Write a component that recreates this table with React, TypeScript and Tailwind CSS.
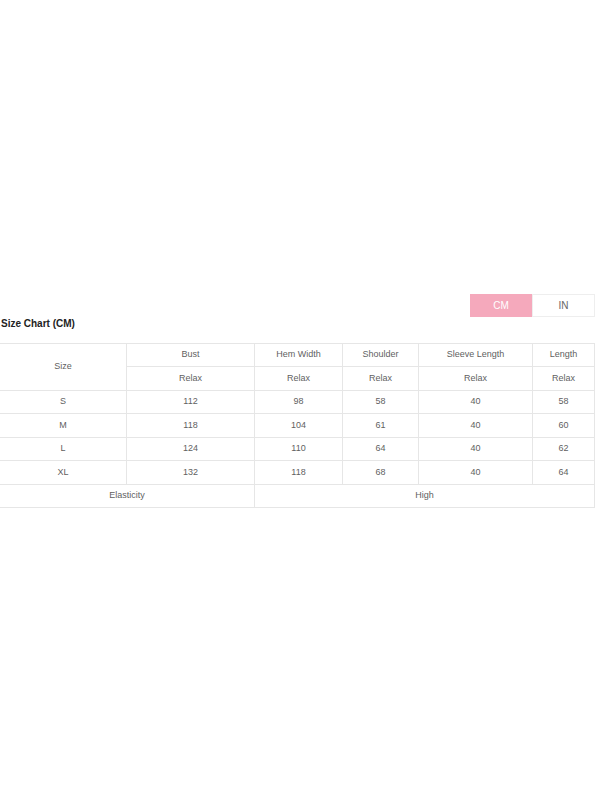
import React, { useState } from 'react';

const rows = [
  ['S', '112', '98', '58', '40', '58'],
  ['M', '118', '104', '61', '40', '60'],
  ['L', '124', '110', '64', '40', '62'],
  ['XL', '132', '118', '68', '40', '64'],
];

const cell = 'border border-[#e6e6e6] text-center font-normal p-0';

export default function App() {
  const [unit, setUnit] = useState<'CM' | 'IN'>('CM');

  return (
    <div className="min-h-[800px] bg-white pt-[294px] font-['Liberation_Sans',Arial,sans-serif] text-[#5f5f5f]">
      {/* Unit toggle */}
      <div className="flex justify-end pr-[5px]">
        <div className="flex h-[23px] text-[10px]">
          <button
            onClick={() => setUnit('CM')}
            className={`w-[62px] ${unit === 'CM' ? 'bg-[#f5a9bc] text-white' : 'border border-[#eeeeee] text-[#666]'}`}
          >
            CM
          </button>
          <button
            onClick={() => setUnit('IN')}
            className={`w-[63px] ${unit === 'IN' ? 'bg-[#f5a9bc] text-white' : 'border border-[#eeeeee] text-[#666]'}`}
          >
            IN
          </button>
        </div>
      </div>

      {/* Title */}
      <h2 className="pl-px text-[10px] font-bold leading-[14px] text-[#222]">Size Chart ({unit})</h2>

      {/* Table */}
      <table className="-ml-px mt-[12px] w-[595px] table-fixed border-collapse text-[9px]">
        <colgroup>
          <col className="w-[127px]" />
          <col className="w-[128px]" />
          <col className="w-[88px]" />
          <col className="w-[76px]" />
          <col className="w-[114px]" />
          <col className="w-[62px]" />
        </colgroup>
        <thead>
          <tr className="h-[23px]">
            <th rowSpan={2} className={cell}>Size</th>
            <th className={cell}>Bust</th>
            <th className={cell}>Hem Width</th>
            <th className={cell}>Shoulder</th>
            <th className={cell}>Sleeve Length</th>
            <th className={cell}>Length</th>
          </tr>
          <tr className="h-[24px]">
            <th className={cell}>Relax</th>
            <th className={cell}>Relax</th>
            <th className={cell}>Relax</th>
            <th className={cell}>Relax</th>
            <th className={cell}>Relax</th>
          </tr>
        </thead>
        <tbody>
          {rows.map((r, i) => (
            <tr key={r[0]} className={i % 2 === 0 ? 'h-[23px]' : 'h-[24px]'}>
              {r.map((v, j) => (
                <td key={j} className={cell}>{v}</td>
              ))}
            </tr>
          ))}
          <tr className="h-[23px]">
            <td colSpan={2} className={cell}>Elasticity</td>
            <td colSpan={4} className={cell}>High</td>
          </tr>
        </tbody>
      </table>
    </div>
  );
}
